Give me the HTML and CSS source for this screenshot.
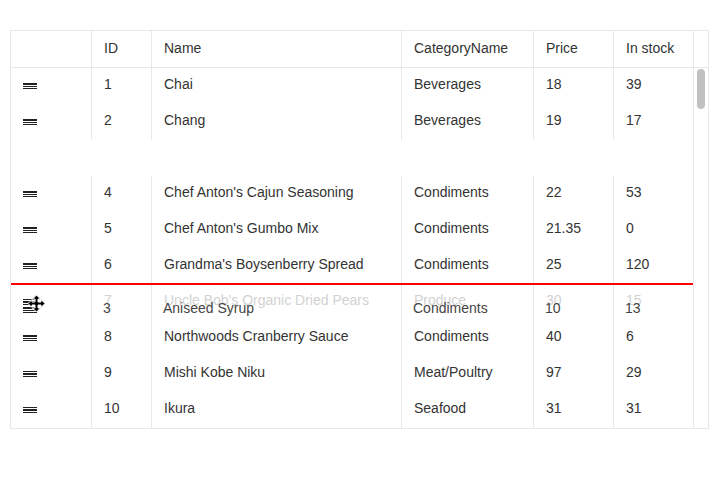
FILE: index.html
```html
<!DOCTYPE html>
<html>
<head>
  <title>Grid - Row reordering</title>
  <link rel="stylesheet" href="styles.css">
</head>
<body>

  <div class="grid">
    <div class="header">
      <div class="cell"></div>
      <div class="cell">ID</div>
      <div class="cell">Name</div>
      <div class="cell">CategoryName</div>
      <div class="cell">Price</div>
      <div class="cell">In stock</div>
      <div class="cell"></div>
    </div>

    <div class="body">
      <div class="rows">
        <div class="row">
          <div class="cell"><span class="handle"></span></div>
          <div class="cell">1</div>
          <div class="cell">Chai</div>
          <div class="cell">Beverages</div>
          <div class="cell">18</div>
          <div class="cell">39</div>
        </div>
        <div class="row">
          <div class="cell"><span class="handle"></span></div>
          <div class="cell">2</div>
          <div class="cell">Chang</div>
          <div class="cell">Beverages</div>
          <div class="cell">19</div>
          <div class="cell">17</div>
        </div>
        <div class="row placeholder"></div>
        <div class="row">
          <div class="cell"><span class="handle"></span></div>
          <div class="cell">4</div>
          <div class="cell">Chef Anton's Cajun Seasoning</div>
          <div class="cell">Condiments</div>
          <div class="cell">22</div>
          <div class="cell">53</div>
        </div>
        <div class="row">
          <div class="cell"><span class="handle"></span></div>
          <div class="cell">5</div>
          <div class="cell">Chef Anton's Gumbo Mix</div>
          <div class="cell">Condiments</div>
          <div class="cell">21.35</div>
          <div class="cell">0</div>
        </div>
        <div class="row">
          <div class="cell"><span class="handle"></span></div>
          <div class="cell">6</div>
          <div class="cell">Grandma's Boysenberry Spread</div>
          <div class="cell">Condiments</div>
          <div class="cell">25</div>
          <div class="cell">120</div>
        </div>
        <div class="row faded">
          <div class="cell"><span class="handle"></span></div>
          <div class="cell">7</div>
          <div class="cell">Uncle Bob's Organic Dried Pears</div>
          <div class="cell">Produce</div>
          <div class="cell">30</div>
          <div class="cell">15</div>
        </div>
        <div class="row">
          <div class="cell"><span class="handle"></span></div>
          <div class="cell">8</div>
          <div class="cell">Northwoods Cranberry Sauce</div>
          <div class="cell">Condiments</div>
          <div class="cell">40</div>
          <div class="cell">6</div>
        </div>
        <div class="row">
          <div class="cell"><span class="handle"></span></div>
          <div class="cell">9</div>
          <div class="cell">Mishi Kobe Niku</div>
          <div class="cell">Meat/Poultry</div>
          <div class="cell">97</div>
          <div class="cell">29</div>
        </div>
        <div class="row">
          <div class="cell"><span class="handle"></span></div>
          <div class="cell">10</div>
          <div class="cell">Ikura</div>
          <div class="cell">Seafood</div>
          <div class="cell">31</div>
          <div class="cell">31</div>
        </div>

        <!-- drop indicator and the dragged row -->
        <div class="drop-line"></div>
        <div class="row clue">
          <div class="cell">
            <span class="handle"></span>
            <svg class="move-cursor" width="19" height="19" viewBox="0 0 19 19">
              <path d="M9.5 1 L13.5 5 L11 5 L11 8 L14 8 L14 5.5 L18 9.5 L14 13.5 L14 11 L11 11 L11 14 L13.5 14 L9.5 18 L5.5 14 L8 14 L8 11 L5 11 L5 13.5 L1 9.5 L5 5.5 L5 8 L8 8 L8 5 L5.5 5 Z" fill="#000" stroke="#fff" stroke-width="1" stroke-linejoin="round"/>
            </svg>
          </div>
          <div class="cell">3</div>
          <div class="cell">Aniseed Syrup</div>
          <div class="cell">Condiments</div>
          <div class="cell">10</div>
          <div class="cell">13</div>
        </div>
      </div>
      <div class="scrollbar">
        <div class="thumb"></div>
      </div>
    </div>
  </div>

</body>
</html>
```

FILE: styles.css
```css
body {
  margin: 0;
  font-family: "Liberation Sans", Arial, sans-serif;
  font-size: 14px;
  color: #333;
  background: #fff;
}
.grid {
  margin: 30px 0 0 10px;
  width: 699px;
  border: 1px solid #e8e8e8;
  box-sizing: border-box;
}
.header {
  display: grid;
  grid-template-columns: 80px 60px 250px 132px 80px 80px 15px;
  height: 37px;
  border-bottom: 1px solid #e8e8e8;
  box-sizing: border-box;
}
.header .cell {
  padding-bottom: 2px;
}
.cell {
  display: flex;
  align-items: center;
  padding: 0 0 4px 12px;
  box-sizing: border-box;
  white-space: nowrap;
  border-left: 1px solid #e8e8e8;
}
.header .cell:first-child,
.row .cell:first-child {
  border-left: none;
}
.body {
  display: flex;
  height: 360px;
}
.rows {
  position: relative;
  width: 682px;
}
.row {
  display: grid;
  grid-template-columns: 80px 60px 250px 132px 80px 80px;
  height: 36px;
}
.row .cell:first-child {
  padding-left: 12px;
  padding-bottom: 0;
}
.handle {
  display: block;
  width: 14px;
  height: 6.5px;
  background: repeating-linear-gradient(#222 0 1.5px, transparent 1.5px 2.5px);
}
.faded .cell {
  color: #d2d2d2;
}
.drop-line {
  position: absolute;
  left: 0;
  right: 0;
  top: 215px;
  height: 2px;
  background: #f00;
}
.clue {
  position: absolute;
  left: 0;
  top: 224px;
  width: 682px;
}
.clue .cell {
  border-left: none;
  color: #444;
}
.clue .cell:first-child {
  position: relative;
}
.move-cursor {
  position: absolute;
  left: 16px;
  top: 2px;
}
.scrollbar {
  position: relative;
  width: 15px;
  border-left: 1px solid #e8e8e8;
  box-sizing: border-box;
}
.thumb {
  position: absolute;
  left: 3px;
  top: 1px;
  width: 8px;
  height: 40px;
  border-radius: 4px;
  background: #c1c1c1;
}
```
